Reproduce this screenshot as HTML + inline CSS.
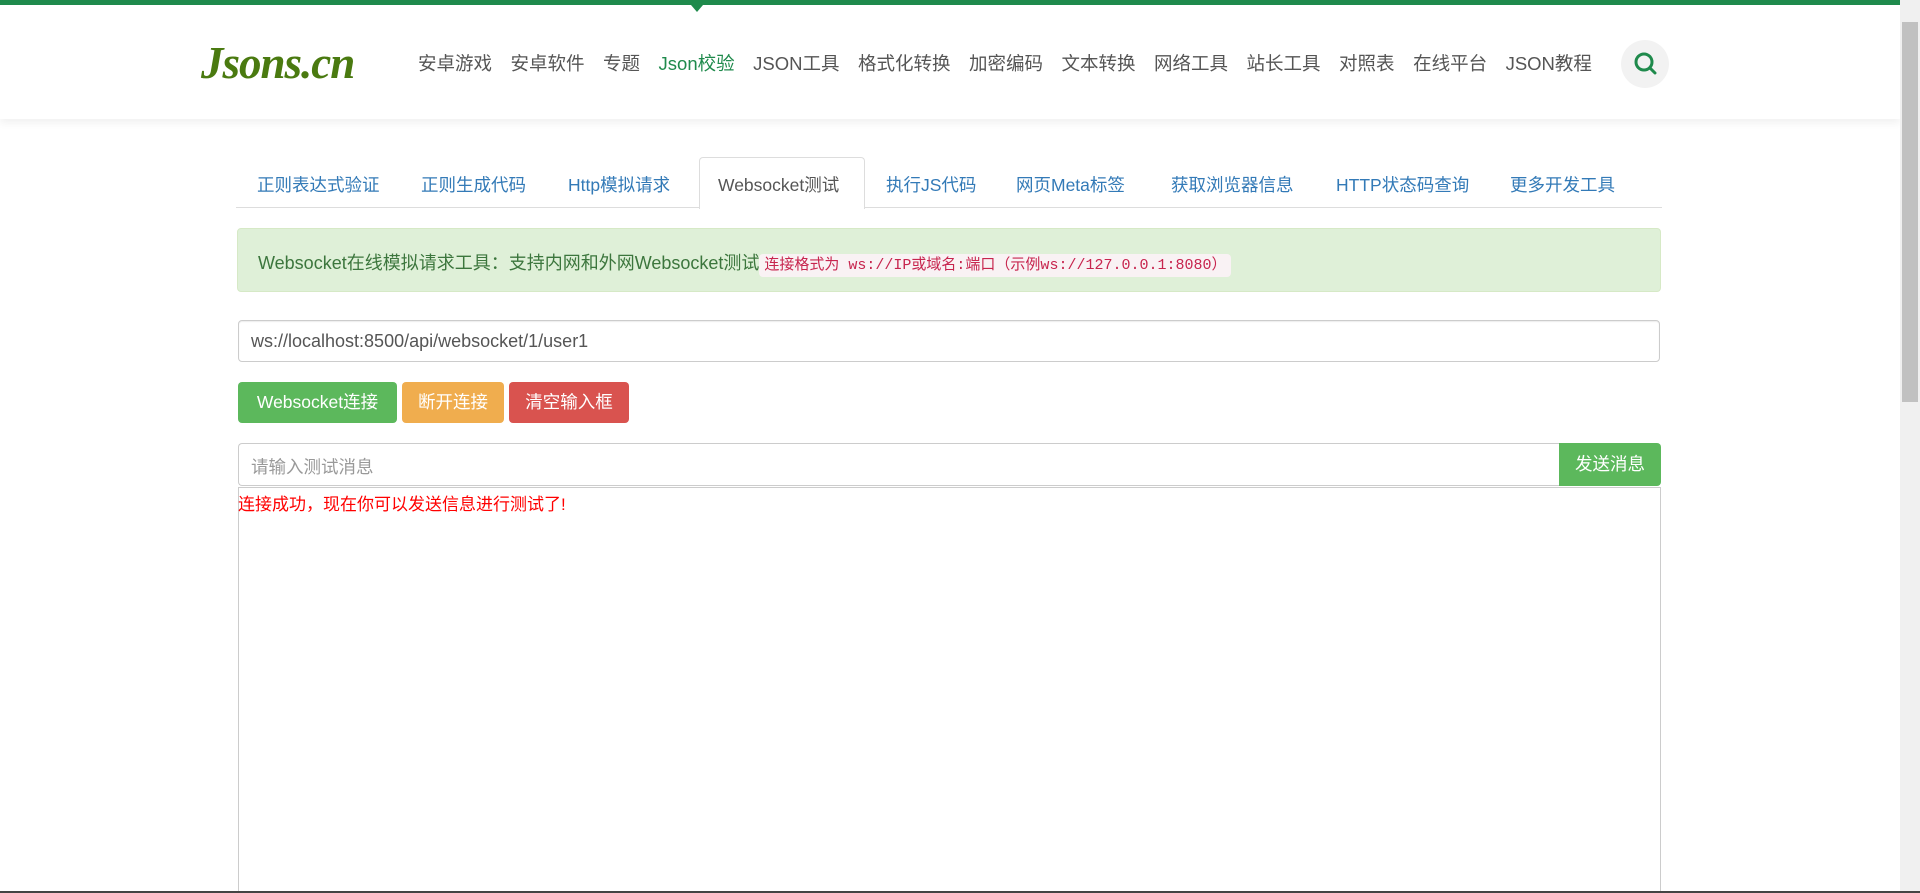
<!DOCTYPE html>
<html><head><meta charset="utf-8"><style>
*{box-sizing:border-box;margin:0;padding:0}
html,body{width:1920px;height:893px;overflow:hidden}
body{background:#fff;font-family:"Liberation Sans","Noto Sans CJK SC",sans-serif;position:relative}
.top{position:absolute;left:0;top:0;width:1900px;height:5px;background:#1f8a4c}
.tri{position:absolute;left:691px;top:5px;width:0;height:0;border-left:6px solid transparent;border-right:6px solid transparent;border-top:7px solid #1f8a4c}
.hdr{position:absolute;left:0;top:5px;width:1900px;height:114px;background:#fff;box-shadow:0 4px 8px rgba(0,0,0,0.06)}
.logo{position:absolute;left:201px;top:37px;font-family:"Liberation Serif",serif;font-style:italic;font-weight:bold;font-size:45px;color:#4a7a10;letter-spacing:-1px}
.nav{position:absolute;left:418px;top:50px;font-size:18.5px;color:#555;white-space:nowrap}
.nav span{margin-right:18.5px}
.nav .on{color:#1f8a4c}
.srch{position:absolute;left:1621px;top:40px;width:48px;height:48px;border-radius:50%;background:#f2f2f2}
.sb{position:absolute;left:1900px;top:0;width:20px;height:893px;background:#f0f0f0}
.thumb{position:absolute;left:1902px;top:22px;width:16px;height:380px;background:#c1c1c1}
.tabs{position:absolute;left:236px;top:207px;width:1426px;height:1px;background:#ddd}
.tab{position:absolute;top:172px;font-size:17.5px;color:#337ab7;white-space:nowrap}
.act{position:absolute;left:699px;top:157px;width:166px;height:52px;border:1px solid #ddd;border-bottom:none;background:#fff;border-radius:4px 4px 0 0}
.alert{position:absolute;left:237px;top:228px;width:1424px;height:64px;background:#dff0d8;border:1px solid #d6e9c6;border-radius:4px;color:#3c763d;font-size:18px;padding:20px 0 0 20px;white-space:nowrap}
.alert code{font-family:"Liberation Mono","Noto Sans CJK SC",monospace;font-size:15px;color:#c7254e;background:#f9f2f4;padding:3px 5px;border-radius:4px}
.inp{position:absolute;left:238px;top:320px;width:1422px;height:42px;border:1px solid #ccc;border-radius:4px;font-size:18px;color:#555;padding:10px 12px;box-shadow:inset 0 1px 1px rgba(0,0,0,.075)}
.btn{position:absolute;top:382px;height:41px;border-radius:4px;color:#fff;font-size:17.5px;text-align:center;line-height:41px}
.msg{position:absolute;left:238px;top:443px;width:1322px;height:43px;border:1px solid #ccc;border-right:none;border-radius:4px 0 0 4px;font-size:17.5px;color:#999;padding:10px 12px}
.send{position:absolute;left:1559px;top:443px;width:102px;height:43px;background:#5cb85c;color:#fff;font-size:17.5px;text-align:center;line-height:43px;border-radius:0 4px 4px 0}
.ta{position:absolute;left:238px;top:487px;width:1423px;height:420px;border:1px solid #ccc}
.red{position:absolute;left:238px;top:490px;color:#f00;font-size:17px;white-space:nowrap}
.bl{position:absolute;left:0;top:891px;width:1920px;height:2px;background:#444}
</style></head><body>
<div class="hdr"></div>
<div class="top"></div><div class="tri"></div>
<div class="logo">Jsons.cn</div>
<div class="nav"><span>安卓游戏</span><span>安卓软件</span><span>专题</span><span class="on">Json校验</span><span>JSON工具</span><span>格式化转换</span><span>加密编码</span><span>文本转换</span><span>网络工具</span><span>站长工具</span><span>对照表</span><span>在线平台</span><span>JSON教程</span></div>
<div class="srch"><svg width="48" height="48" viewBox="0 0 48 48"><circle cx="23" cy="22" r="8" fill="none" stroke="#1f8a4c" stroke-width="3"/><line x1="29" y1="28" x2="34" y2="33" stroke="#1f8a4c" stroke-width="3" stroke-linecap="round"/></svg></div>
<div class="tabs"></div>
<div class="act"></div>
<div class="tab" style="left:257px">正则表达式验证</div>
<div class="tab" style="left:421px">正则生成代码</div>
<div class="tab" style="left:568px">Http模拟请求</div>
<div class="tab" style="left:718px;color:#555">Websocket测试</div>
<div class="tab" style="left:886px">执行JS代码</div>
<div class="tab" style="left:1016px">网页Meta标签</div>
<div class="tab" style="left:1171px">获取浏览器信息</div>
<div class="tab" style="left:1336px">HTTP状态码查询</div>
<div class="tab" style="left:1510px">更多开发工具</div>
<div class="alert">Websocket在线模拟请求工具：支持内网和外网Websocket测试<code>连接格式为 ws://IP或域名:端口（示例ws://127.0.0.1:8080）</code></div>
<div class="inp">ws://localhost:8500/api/websocket/1/user1</div>
<div class="btn" style="left:238px;width:159px;background:#5cb85c">Websocket连接</div>
<div class="btn" style="left:402px;width:102px;background:#f0ad4e">断开连接</div>
<div class="btn" style="left:509px;width:120px;background:#d9534f">清空输入框</div>
<div class="msg">请输入测试消息</div>
<div class="send">发送消息</div>
<div class="ta"></div>
<div class="red">连接成功，现在你可以发送信息进行测试了!</div>
<div class="sb"></div><div class="thumb"></div>
<div class="bl"></div>
</body></html>
